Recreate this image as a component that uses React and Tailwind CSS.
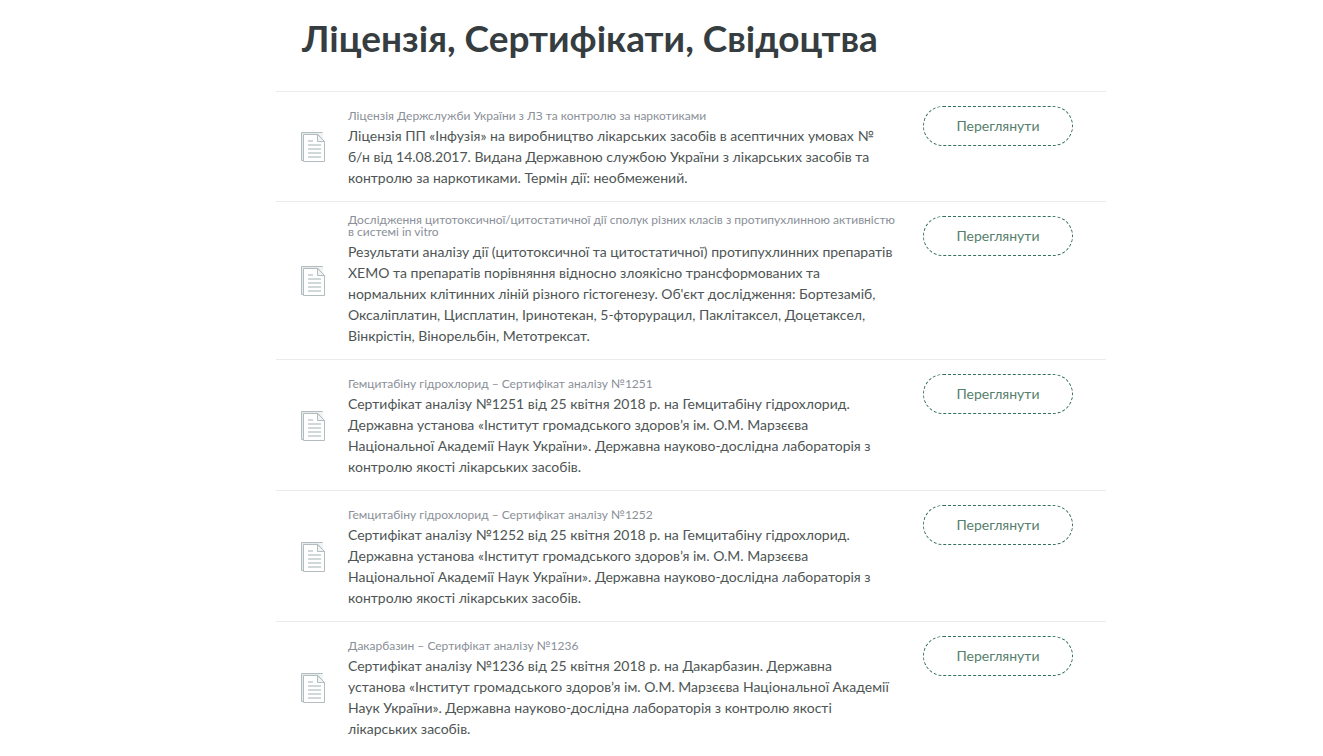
import React from "react";

const laboratory = [
  "Державна установа «Інститут громадського здоров’я ім. О.М. Марзєєва",
  "Національної Академії Наук України». Державна науково-дослідна лабораторія з",
  "контролю якості лікарських засобів.",
];

const documents = [
  {
    title: ["Ліцензія Держслужби України з ЛЗ та контролю за наркотиками"],
    text: [
      "Ліцензія ПП «Інфузія» на виробництво лікарських засобів в асептичних умовах №",
      "б/н від 14.08.2017. Видана Державною службою України з лікарських засобів та",
      "контролю за наркотиками. Термін дії: необмежений.",
    ],
  },
  {
    title: [
      "Дослідження цитотоксичної/цитостатичної дії сполук різних класів з протипухлинною активністю",
      "в системі in vitro",
    ],
    text: [
      "Результати аналізу дії (цитотоксичної та цитостатичної) протипухлинних препаратів",
      "ХЕМО та препаратів порівняння відносно злоякісно трансформованих та",
      "нормальних клітинних ліній різного гістогенезу. Об'єкт дослідження: Бортезаміб,",
      "Оксаліплатин, Цисплатин, Іринотекан, 5-фторурацил, Паклітаксел, Доцетаксел,",
      "Вінкрістін, Вінорельбін, Метотрексат.",
    ],
  },
  {
    title: ["Гемцитабіну гідрохлорид – Сертифікат аналізу №1251"],
    text: ["Сертифікат аналізу №1251 від 25 квітня 2018 р. на Гемцитабіну гідрохлорид.", ...laboratory],
  },
  {
    title: ["Гемцитабіну гідрохлорид – Сертифікат аналізу №1252"],
    text: ["Сертифікат аналізу №1252 від 25 квітня 2018 р. на Гемцитабіну гідрохлорид.", ...laboratory],
  },
  {
    title: ["Дакарбазин – Сертифікат аналізу №1236"],
    text: [
      "Сертифікат аналізу №1236 від 25 квітня 2018 р. на Дакарбазин. Державна",
      "установа «Інститут громадського здоров’я ім. О.М. Марзєєва Національної Академії",
      "Наук України». Державна науково-дослідна лабораторія з контролю якості",
      "лікарських засобів.",
    ],
  },
];

function DocumentIcon() {
  return (
    <svg className="h-[30px] w-6 shrink-0" viewBox="0 0 24 30" fill="none" aria-hidden="true">
      <path d="M.5 .5h21v28H.5z" fill="#e6ebec" stroke="#b3bdc0" />
      <path d="M2.500 2.500H17l6.500 7v20h-21z" fill="#fff" stroke="#b3bdc0" />
      <path d="M17 1h5v7z" fill="#f1f4f4" />
      <path d="M16.500 2.500v7h7z" fill="#f1f4f4" stroke="#b3bdc0" />
      <path d="M7 9h5M7 13h13M7 17h13M7 21h13M7 25h13" stroke="#d0d8da" strokeWidth="2" />
    </svg>
  );
}

function Lines({ items }) {
  return items.map((line) => (
    <span key={line} className="block sm:whitespace-nowrap">
      {line}{" "}
    </span>
  ));
}

function DocumentRow({ item }) {
  return (
    <li className="flex border-t border-[#ebebeb] pl-[25px] pr-[33px]">
      <div className="flex items-center pt-px">
        <DocumentIcon />
      </div>
      <div className="ml-[23px] min-w-0 flex-1 pb-[13px] pt-3">
        <h2 className="flex min-h-[18px] flex-col justify-end text-[12px] leading-3 text-[#8a8f98]">
          <Lines items={item.title} />
        </h2>
        <p className="mt-[3px] text-[14px] leading-[21px] text-[#4e5554]">
          <Lines items={item.text} />
        </p>
      </div>
      <button
        type="button"
        className="mt-3.5 h-10 w-[150px] shrink-0 cursor-pointer rounded-full border border-dashed border-[#34705c] text-[14px] leading-5 text-[#56806c]"
      >
        Переглянути
      </button>
    </li>
  );
}

export default function App() {
  return (
    <main className="flex min-h-screen justify-center bg-white pl-[59px] font-['Lato','Open_Sans',sans-serif]">
      <div className="w-full max-w-[830px]">
        <h1 className="px-[26px] pb-[30px] pt-[15px] text-[37px] font-bold leading-[46px] text-[#363d40]">
          Ліцензія, Сертифікати, Свідоцтва
        </h1>
        <ul>
          {documents.map((item) => (
            <DocumentRow key={item.title[0]} item={item} />
          ))}
        </ul>
      </div>
    </main>
  );
}
